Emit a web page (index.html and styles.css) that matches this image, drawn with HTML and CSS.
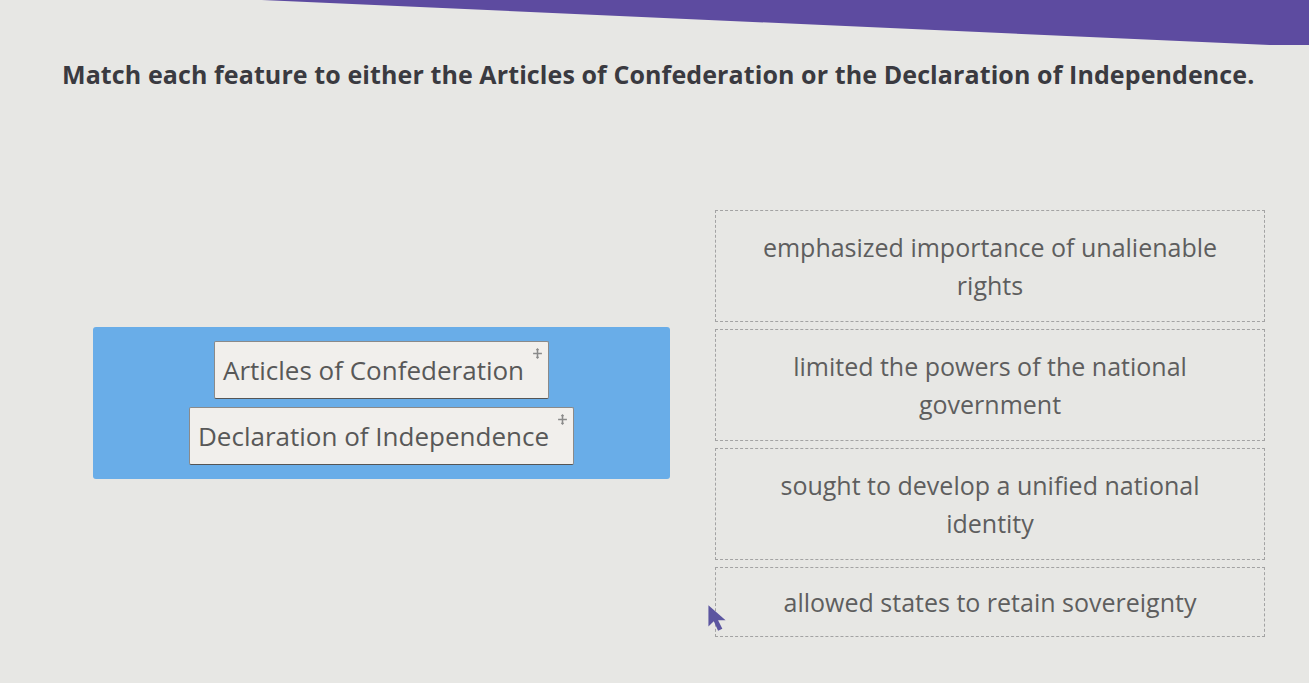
FILE: index.html
```html
<!DOCTYPE html>
<html lang="en">
<head>
    <meta charset="UTF-8">
    <meta name="viewport" content="width=device-width, initial-scale=1.0">
    <title>Matching</title>
    <link rel="stylesheet" href="styles.css">
</head>
<body>
    <div class="top-bar"></div>

    <main class="question">
        <h1 class="prompt">Match each feature to either the Articles of Confederation or the Declaration of Independence.</h1>

        <div class="match-area">
            <div class="source-tray">
                <div class="drag-card">
                    <span>Articles of Confederation</span>
                    <svg class="move-icon" viewBox="0 0 10 10"><path d="M5 1v8M1 5h8M4 2l1-1 1 1M4 8l1 1 1-1"/></svg>
                </div>
                <div class="drag-card">
                    <span>Declaration of Independence</span>
                    <svg class="move-icon" viewBox="0 0 10 10"><path d="M5 1v8M1 5h8M4 2l1-1 1 1M4 8l1 1 1-1"/></svg>
                </div>
            </div>

            <div class="targets">
                <div class="drop-zone tall">emphasized importance of unalienable rights</div>
                <div class="drop-zone tall">limited the powers of the national government</div>
                <div class="drop-zone tall">sought to develop a unified national identity</div>
                <div class="drop-zone">allowed states to retain sovereignty</div>
            </div>
        </div>

        <svg class="cursor" viewBox="0 0 20 28">
            <path d="M2 2v20l5-5 4 9 4-2-4-8h7z"/>
        </svg>
    </main>
</body>
</html>
```

FILE: styles.css
```css
* {
    margin: 0;
    padding: 0;
    box-sizing: border-box;
}

body {
    font-family: 'Open Sans', 'Noto Sans', sans-serif;
    background: #e7e7e4;
    color: #555;
    overflow: hidden;
    height: 100vh;
}

.top-bar {
    height: 45px;
    background: #5d4ba0;
    clip-path: polygon(20% 0, 100% 0, 100% 100%, 97% 100%);
}

.question {
    position: relative;
    padding: 12px 0 0 62px;
}

.prompt {
    font-size: 25px;
    font-weight: 700;
    color: #3a3a40;
    line-height: 34px;
    letter-spacing: 0.1px;
    white-space: nowrap;
}

.match-area {
    display: flex;
    align-items: flex-start;
    gap: 45px;
    margin-top: 119px;
    margin-left: 31px;
}

.source-tray {
    width: 577px;
    height: 152px;
    margin-top: 117px;
    background: #69ade8;
    border-radius: 3px;
    display: flex;
    flex-direction: column;
    align-items: center;
    justify-content: center;
    gap: 8px;
}

.drag-card {
    position: relative;
    display: flex;
    align-items: center;
    height: 58px;
    padding: 0 24px 0 8px;
    background: #f1efec;
    border: 1px solid #8a8a8a;
    border-bottom-color: #555;
    border-radius: 2px;
    font-size: 26px;
    color: #585858;
}

.move-icon {
    position: absolute;
    top: 6px;
    right: 5px;
    width: 11px;
    height: 11px;
    fill: none;
    stroke: #8a8a8a;
    stroke-width: 1.4;
}

.targets {
    width: 550px;
    display: flex;
    flex-direction: column;
    gap: 7px;
}

.drop-zone {
    border: 1px dashed #a3a3a3;
    padding: 15px 40px;
    text-align: center;
    font-size: 25px;
    line-height: 38px;
    color: #5e5e5e;
}

.drop-zone.tall {
    padding: 17px 40px;
}

.cursor {
    position: absolute;
    left: 706px;
    top: 558px;
    width: 22px;
    height: 30px;
    fill: #5c56a0;
}
```
